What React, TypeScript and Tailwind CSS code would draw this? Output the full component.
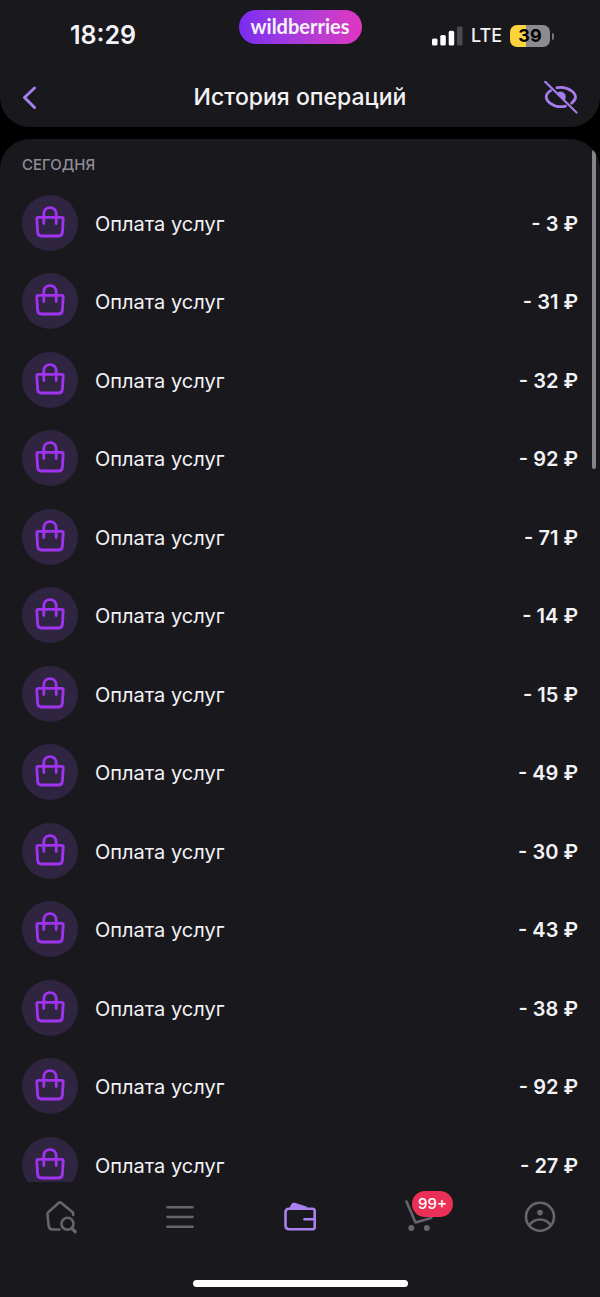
type Operation = {
  id: number;
  title: string;
  amount: number;
};

const amounts = [3, 31, 32, 92, 71, 14, 15, 49, 30, 43, 38, 92, 27];

const operations: Operation[] = amounts.map((amount, index) => ({
  id: index + 1,
  title: 'Оплата услуг',
  amount,
}));

function BagIcon() {
  return (
    <svg viewBox="0 0 32 34" className="w-8 h-[34px] text-[#a033f0]" fill="none" stroke="currentColor" strokeWidth="2.8" strokeLinecap="round" strokeLinejoin="round" aria-hidden="true">
      <path d="M4.200 12.300h23.600c1 0 1.500.6 1.400 1.600l-.8 13.200c-.2 2.500-1.600 3.900-4 3.900H7.600c-2.400 0-3.800-1.400-4-3.900L2.800 13.900c-.1-1 .4-1.600 1.400-1.600Z" />
      <path d="M9.800 18.500V9c0-4 2.700-6.400 6.200-6.400S22.200 5 22.200 9v9.500" />
    </svg>
  );
}

function StatusBar() {
  return (
    <div className="relative flex items-center justify-between h-[68px] pt-1 pl-[70px] pr-[46px]">
      <time className="font-semibold text-[25px]">18:29</time>
      <div className="absolute inset-x-0 top-[10px] flex justify-center">
        <div className="flex items-center justify-center w-[123px] h-[34px] pb-[2px] rounded-full bg-linear-to-r from-[#7a2bf0] to-[#e035c0] font-[Lato,sans-serif] font-bold text-xl">
          wildberries
        </div>
      </div>
      <div className="flex items-center gap-2">
        <svg viewBox="0 0 31 20" className="w-[31px] h-5" fill="white" aria-hidden="true">
          <rect x="0" y="12.500" width="5.500" height="7" rx="1.600" />
          <rect x="8.300" y="9" width="5.500" height="10.500" rx="1.600" />
          <rect x="16.700" y="4.800" width="5.500" height="14.700" rx="1.600" />
          <rect x="25" y="0.500" width="5.500" height="19" rx="1.600" fillOpacity="0.22" />
        </svg>
        <span className="font-medium text-lg">LTE</span>
        <div className="flex items-center gap-[2px]">
          <div className="flex items-center justify-center w-10 h-[22px] rounded-[7px] bg-linear-to-r from-[#fbd33b] from-39% to-[#8c8c8e] to-39% font-bold text-lg text-black">
            39
          </div>
          <div className="w-[2px] h-[7px] rounded-r-full bg-[#77777a]" />
        </div>
      </div>
    </div>
  );
}

function Header() {
  return (
    <header className="shrink-0 rounded-b-[30px] bg-[#19181d]">
      <StatusBar />
      <div className="flex items-center justify-between h-[59px] px-[22px]">
        <button type="button" aria-label="Назад" className="flex items-center w-[34px] h-[34px] text-[#a57dec]">
          <svg viewBox="0 0 16 24" className="w-4 h-6" fill="none" stroke="currentColor" strokeWidth="3" strokeLinecap="round" strokeLinejoin="round" aria-hidden="true">
            <path d="M12.500 2 2.500 11.500l10 10" />
          </svg>
        </button>
        <h1 className="font-medium text-[23px]">История операций</h1>
        <button type="button" aria-label="Показать суммы" className="text-[#a57dec]">
          <svg viewBox="0 0 34 34" className="w-[34px] h-[34px]" fill="none" stroke="currentColor" strokeWidth="2.800" strokeLinecap="round" strokeLinejoin="round" aria-hidden="true">
            <path d="M1.200 0.800 32.500 31.500" strokeWidth="2.200" />
            <path d="M13 6.700c1.200-.3 2.500-.4 3.800-.4 8.200 0 14.700 5.800 14.700 9.700 0 2-1.500 4.300-3.900 6.200" />
            <path d="M6.600 9.600C3.800 11.400 2.200 14 2.200 16c0 4 6.200 9.700 14.600 9.700 1.700 0 3.200-.2 4.700-.6" />
            <path d="M12.700 12a4.700 4.700 0 0 1 7.600 7.400Z" fill="currentColor" stroke="none" />
          </svg>
        </button>
      </div>
    </header>
  );
}

function OperationRow({ operation }: { operation: Operation }) {
  return (
    <li className="flex items-center h-14 odd:mb-[22px] even:mb-[23px]">
      <div className="flex items-center justify-center shrink-0 w-14 h-14 pb-[2px] rounded-full bg-[#302541]">
        <BagIcon />
      </div>
      <span className="grow ml-[17px] pt-[2px] text-xl">{operation.title}</span>
      <span className="pt-[2px] font-semibold text-xl">- {operation.amount} ₽</span>
    </li>
  );
}

function TabBar() {
  return (
    <footer className="shrink-0 bg-[#19181d]">
      <nav className="grid grid-cols-5 h-[70px] text-[#66646c]">
        <a href="#home" aria-label="Главная" className="flex items-center justify-center">
          <svg viewBox="0 0 34 34" className="w-[34px] h-[34px]" fill="none" stroke="currentColor" strokeWidth="2.600" strokeLinecap="round" strokeLinejoin="round" aria-hidden="true">
            <path d="M16.500 29.500H9.500c-2.600 0-3.700-1.200-3.900-3.800L4.500 14.300c-.1-1 .2-1.700 1-2.400L15.600 3c1-.8 1.700-.8 2.700 0L30 12.600l.2 2.300" />
            <circle cx="24.500" cy="23.800" r="6" />
            <path d="m29 28.500 3.300 3.300" strokeWidth="3.200" />
          </svg>
        </a>
        <a href="#catalog" aria-label="Каталог" className="flex items-center justify-center">
          <svg viewBox="0 0 30 26" className="w-[30px] h-[26px]" fill="none" stroke="currentColor" strokeWidth="2.600" strokeLinecap="round" aria-hidden="true">
            <path d="M2.500 3.200h25M2.500 13h25M2.500 22.800h25" />
          </svg>
        </a>
        <a href="#wallet" aria-label="Кошелёк" aria-current="page" className="flex items-center justify-center text-[#a982ef]">
          <svg viewBox="0 0 34 30" className="w-[34px] h-[30px]" fill="none" stroke="currentColor" strokeWidth="2.600" strokeLinecap="round" strokeLinejoin="round" aria-hidden="true">
            <path d="M6 6.800h23.500c1.500 0 2.200.7 2.200 2.200v16c0 1.500-.7 2.200-2.200 2.200H6.500c-2.700 0-4-1.300-4-4V10.300c0-2.200 1.300-3.500 3.500-3.500Z" />
            <path d="m8 5.600 1.300-2.600c.4-.9 1.100-1.200 2-.9L23 5.800Z" fill="currentColor" />
            <path d="M31 17.200h-9.500" />
          </svg>
        </a>
        <a href="#cart" aria-label="Корзина" className="relative flex items-center justify-center">
          <svg viewBox="0 0 34 34" className="w-[34px] h-[34px]" fill="none" stroke="currentColor" strokeWidth="2.600" strokeLinecap="round" strokeLinejoin="round" aria-hidden="true">
            <path d="M3.500 1.500 12.500 22.500l15.500-4.500 4-9.500" />
            <circle cx="8.300" cy="28" r="3" fill="currentColor" stroke="none" />
            <circle cx="23.800" cy="28" r="3" fill="currentColor" stroke="none" />
          </svg>
          <span className="absolute left-1/2 top-[9px] -ml-2 flex items-center justify-center w-[41px] h-[26px] pt-px rounded-full bg-[#eb3057] text-white font-medium text-[15px]">
            99+
          </span>
        </a>
        <a href="#profile" aria-label="Профиль" className="flex items-center justify-center">
          <svg viewBox="0 0 32 32" className="w-8 h-8" fill="none" stroke="currentColor" strokeWidth="2.600" strokeLinecap="round" aria-hidden="true">
            <circle cx="16" cy="15.800" r="14" />
            <circle cx="16" cy="11.600" r="2.800" fill="currentColor" stroke="none" />
            <path d="M5.500 24C8 20.300 11.700 18.500 16 18.500s8 1.800 10.500 5.500" />
          </svg>
        </a>
      </nav>
      <div className="flex justify-center pt-[28px] pb-[10px]">
        <div className="w-[215px] h-[7px] rounded-full bg-white" />
      </div>
    </footer>
  );
}

export default function App() {
  return (
    <div className="flex flex-col h-screen bg-black text-[#f3f2f5] font-[Inter,sans-serif]">
      <Header />
      <main className="relative grow min-h-0 mt-3 rounded-t-[30px] overflow-hidden bg-[#19181d]">
        <div className="h-full px-[22px] overflow-y-auto [scrollbar-width:none]">
          <h2 className="pt-4 pb-5 font-medium text-[15px] leading-5 text-[#8f8d98]">СЕГОДНЯ</h2>
          <ul>
            {operations.map((operation) => (
              <OperationRow key={operation.id} operation={operation} />
            ))}
          </ul>
        </div>
        {/* scroll thumb */}
        <div className="absolute top-[11px] right-1 w-1 h-[319px] rounded-full bg-[#858488]" />
      </main>
      <TabBar />
    </div>
  );
}
